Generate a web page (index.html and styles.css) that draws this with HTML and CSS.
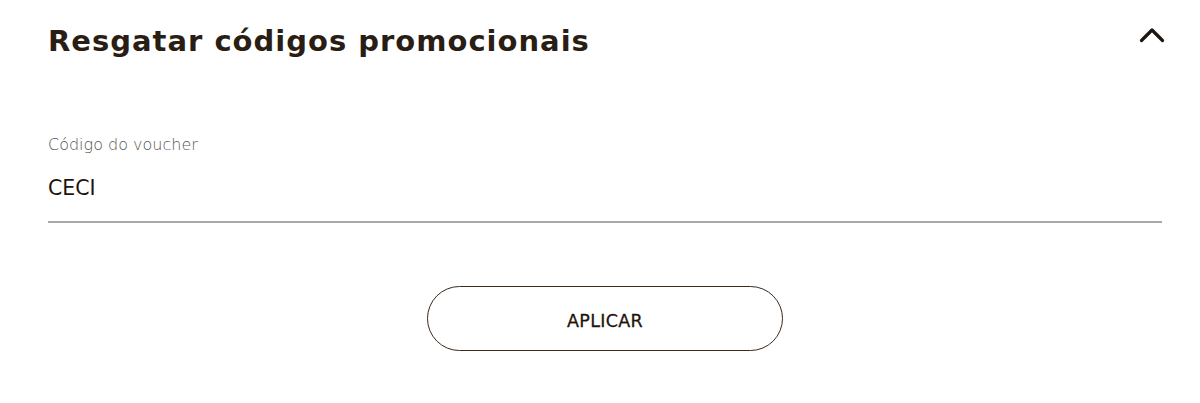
FILE: index.html
```html
<!DOCTYPE html>
<html lang="pt">
<head>
<meta charset="utf-8">
<title>Resgatar códigos promocionais</title>
<link rel="stylesheet" href="styles.css">
</head>
<body>
<section class="promo">
  <header class="promo-head">
    <h2 class="promo-title">Resgatar códigos promocionais</h2>
    <button class="toggle" aria-label="Recolher">
      <svg width="26" height="16" viewBox="0 0 26 16"><path d="M2.5 13.5 L13 3 L23.5 13.5" fill="none" stroke="#1e140c" stroke-width="3.2" stroke-linecap="round" stroke-linejoin="round"/></svg>
    </button>
  </header>
  <div class="field">
    <label class="field-label" for="voucher">Código do voucher</label>
    <input class="field-input" id="voucher" type="text" value="CECI">
  </div>
  <div class="actions">
    <button class="apply">APLICAR</button>
  </div>
</section>
</body>
</html>
```

FILE: styles.css
```css
* { box-sizing: border-box; }
html, body { margin: 0; padding: 0; background: #fff; }
body { font-family: "DejaVu Sans", "Noto Sans", sans-serif; color: #2a1e14; }
.promo { padding: 18px 38px 0 48px; }
.promo-head { display: flex; align-items: center; justify-content: space-between; height: 46px; }
.promo-title { margin: 0; font-size: 29px; font-weight: 700; color: #2a1e14; letter-spacing: 1px; }
.toggle { background: none; border: 0; padding: 0; width: 26px; height: 16px; display: flex; margin-right: -3px; margin-top: -12px; }
.field { margin-top: 72px; display: flex; flex-direction: column; }
.field-label { font-size: 16px; color: #5a5550; font-weight: 300; line-height: 18px; }
.field-input { border: 0; border-bottom: 2px solid #a9a9a9; font-family: inherit; font-size: 20.5px; color: #1e140c; padding: 22px 0 21px 0; outline: none; background: none; width: 100%; }
.actions { display: flex; justify-content: center; margin-top: 63px; }
.apply { width: 356px; height: 65px; border-radius: 33px; border: 1.5px solid #3a2a1e; background: #fff; font-family: inherit; font-size: 17.5px; font-weight: 400; color: #1e140c; letter-spacing: 0.3px; -webkit-text-stroke: 0.3px #1e140c; padding-top: 5px; }
```
